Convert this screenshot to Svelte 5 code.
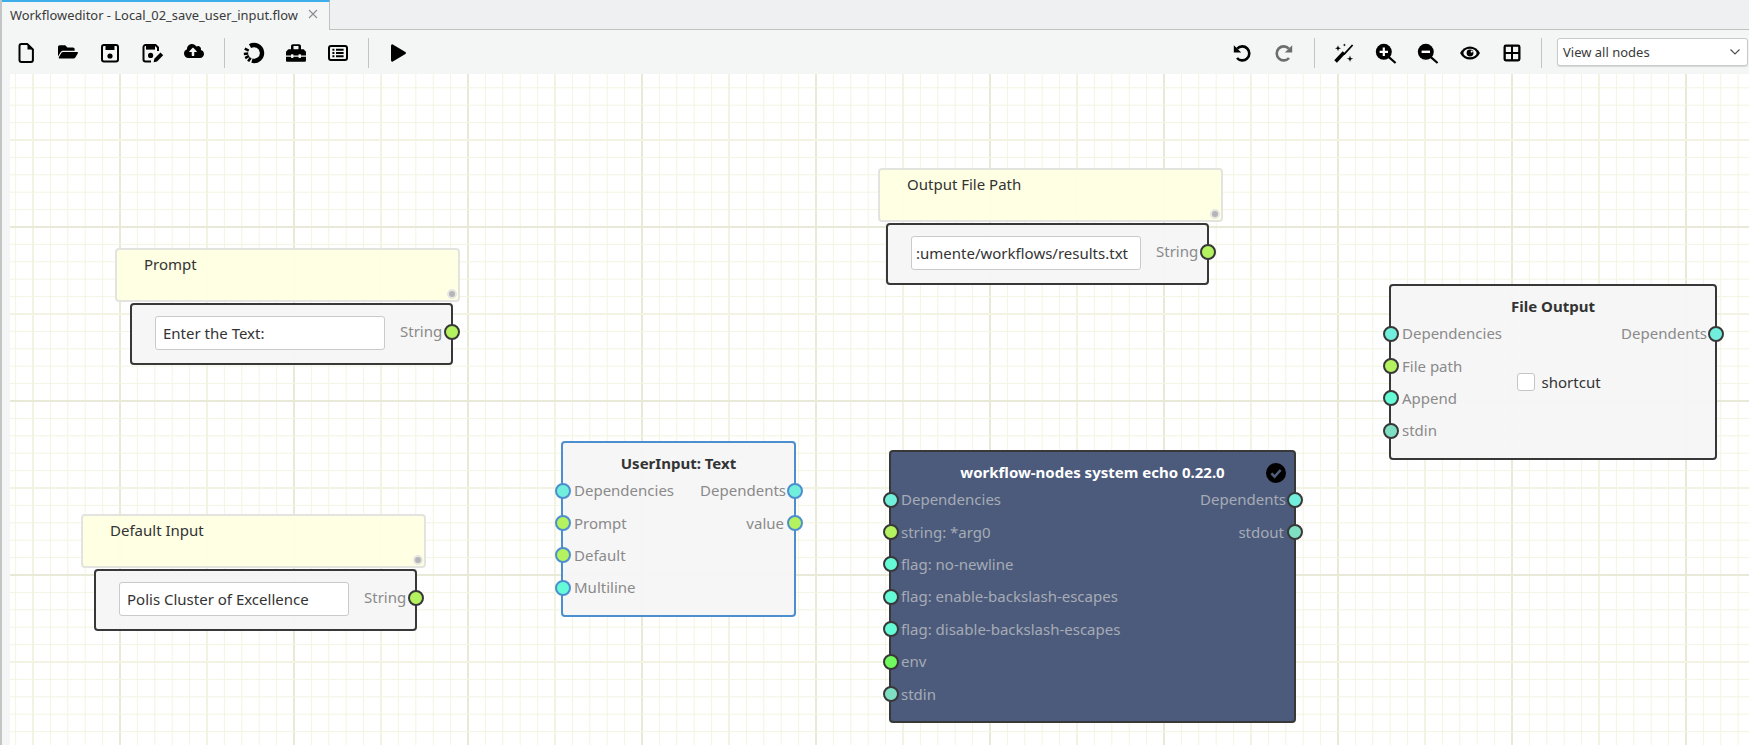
<script lang="ts">
  const DEP = '#71efdc';
  const STR = '#b5f25f';
  const FLAG = '#64fbd6';
  const ENV = '#70fb5e';
  const PIPE = '#7fdfc2';

  type Port = { label: string; color: string };
  type Node = {
    title: string;
    x: number;
    y: number;
    w: number;
    h: number;
    tone?: 'selected' | 'dark';
    inputs: Port[];
    outputs: Port[];
    shortcut?: boolean;
    done?: boolean;
  };

  const nodes: Node[] = [
    {
      title: 'UserInput: Text',
      x: 561, y: 441, w: 235, h: 176,
      tone: 'selected',
      inputs: [
        { label: 'Dependencies', color: DEP },
        { label: 'Prompt', color: STR },
        { label: 'Default', color: STR },
        { label: 'Multiline', color: FLAG },
      ],
      outputs: [
        { label: 'Dependents', color: DEP },
        { label: 'value', color: STR },
      ],
    },
    {
      title: 'workflow-nodes system echo 0.22.0',
      x: 889, y: 450, w: 407, h: 273,
      tone: 'dark',
      done: true,
      inputs: [
        { label: 'Dependencies', color: DEP },
        { label: 'string: *arg0', color: STR },
        { label: 'flag: no-newline', color: FLAG },
        { label: 'flag: enable-backslash-escapes', color: FLAG },
        { label: 'flag: disable-backslash-escapes', color: FLAG },
        { label: 'env', color: ENV },
        { label: 'stdin', color: PIPE },
      ],
      outputs: [
        { label: 'Dependents', color: DEP },
        { label: 'stdout', color: PIPE },
      ],
    },
    {
      title: 'File Output',
      x: 1389, y: 284, w: 328, h: 176,
      shortcut: true,
      inputs: [
        { label: 'Dependencies', color: DEP },
        { label: 'File path', color: STR },
        { label: 'Append', color: FLAG },
        { label: 'stdin', color: PIPE },
      ],
      outputs: [{ label: 'Dependents', color: DEP }],
    },
  ];

  // note + source node pairs, x/y is the note corner, inset is how far the node sits in
  const sources = [
    { note: 'Prompt', value: 'Enter the Text:', x: 115, y: 248, inset: 15 },
    { note: 'Output File Path', value: ':umente/workflows/results.txt', x: 878, y: 168, inset: 8, scrolled: true },
    { note: 'Default Input', value: 'Polis Cluster of Excellence', x: 81, y: 514, inset: 13 },
  ];

  const CANVAS_X = 10;
  const CANVAS_Y = 74;
  const STEP = 17.4;

  function gridKind(k: number) {
    if (k % 10 === 0) return 'heavy';
    if (k % 5 === 0) return 'medium';
    return 'minor';
  }

  // k = 0 sits on a heavy line, everything else counts out from there
  const vLines = Array.from({ length: 104 }, (_, i) => {
    const k = i - 6;
    return { pos: 110 + k * STEP, kind: gridKind(k) };
  });
  const hLines = Array.from({ length: 44 }, (_, i) => {
    const k = i - 8;
    return { pos: 153 + k * STEP, kind: gridKind(k) };
  });
</script>

<div class="window">
  <div class="tabbar">
    <div class="tab">
      <span>Workfloweditor - Local_02_save_user_input.flow</span>
      <svg class="close" width="10" height="10" viewBox="0 0 10 10">
        <path d="M1 1l8 8M9 1l-8 8" stroke="#8a8d90" stroke-width="1.1" fill="none" />
      </svg>
    </div>
  </div>

  <div class="toolbar">
    <button class="tool" aria-label="New">
      <svg width="24" height="24" viewBox="0 0 24 24">
        <path d="M7.5 3.100h6l5.400 5.400v10.400a2 2 0 0 1-2 2H7.500a2 2 0 0 1-2-2V5.100a2 2 0 0 1 2-2z" fill="none" stroke="#000" stroke-width="2" stroke-linejoin="round" />
        <path d="M13.500 3.100l5.400 5.400h-5.400z" fill="#000" />
      </svg>
    </button>
    <button class="tool" aria-label="Open">
      <svg width="24" height="24" viewBox="0 0 24 24">
        <g transform="translate(2 2) scale(0.0347)">
          <path d="M572.694 292.093L500.27 416.248A63.997 63.997 0 0 1 444.989 448H45.025c-18.523 0-30.064-20.093-20.731-36.093l72.424-124.155A64 64 0 0 1 152 256h399.964c18.523 0 30.064 20.093 20.73 36.093zM152 224h328v-48c0-26.51-21.49-48-48-48H272l-64-64H48C21.49 64 0 85.49 0 112v278.046l69.077-118.418C86.214 242.25 117.989 224 152 224z" />
        </g>
      </svg>
    </button>
    <button class="tool" aria-label="Save">
      <svg width="24" height="24" viewBox="0 0 24 24">
        <rect x="4" y="4" width="16" height="16.400" rx="2" fill="none" stroke="#000" stroke-width="2" />
        <rect x="7.500" y="4" width="9" height="5" fill="#000" />
        <circle cx="12" cy="15" r="2.600" fill="#000" />
      </svg>
    </button>
    <button class="tool" aria-label="Save as">
      <svg width="24" height="24" viewBox="0 0 24 24">
        <path d="M11 20.400H5.500a2 2 0 0 1-2-2V6a2 2 0 0 1 2-2h10l2.500 2.500V10" fill="none" stroke="#000" stroke-width="2" />
        <rect x="6" y="4" width="9" height="4.600" fill="#000" />
        <circle cx="10.600" cy="14.400" r="2.600" fill="#000" />
        <path d="M13.600 21.200l.7-3.400 6.200-6.200 2.700 2.700-6.200 6.200z" fill="#000" />
      </svg>
    </button>
    <button class="tool" aria-label="Upload">
      <svg width="24" height="24" viewBox="0 0 24 24">
        <g transform="translate(2 2) scale(0.03125)">
          <path d="M537.6 226.6c4.1-10.7 6.4-22.4 6.4-34.6 0-53-43-96-96-96-19.7 0-38.1 6-53.3 16.2C367 64.2 315.3 32 256 32c-88.4 0-160 71.6-160 160 0 2.7.1 5.4.2 8.1C40.2 219.8 0 273.2 0 336c0 79.5 64.5 144 144 144h368c70.7 0 128-57.3 128-128 0-61.9-44-113.6-102.4-125.4zM393.4 288H328v112c0 8.8-7.2 16-16 16h-48c-8.8 0-16-7.2-16-16V288h-65.4c-14.3 0-21.4-17.2-11.3-27.3l105.4-105.4c6.2-6.2 16.4-6.2 22.6 0l105.4 105.4c10.1 10.1 2.9 27.3-11.3 27.3z" />
        </g>
      </svg>
    </button>
    <span class="sep wide"></span>
    <button class="tool" aria-label="Runs">
      <svg width="24" height="24" viewBox="0 0 24 24">
        <path d="M8 5.070A8 8 0 1 1 9.930 19.730" fill="none" stroke="#000" stroke-width="4.400" />
        <path d="M8.670 16.750L6.150 20.350M6.980 14.900L3.170 17.100M6.220 12.500L1.840 12.890M6.740 9.550L2.760 7.690" stroke="#000" stroke-width="2.500" fill="none" />
      </svg>
    </button>
    <button class="tool" aria-label="Tools">
      <svg width="24" height="24" viewBox="0 0 24 24">
        <g transform="translate(2 2) scale(0.039)">
          <path d="M502.63 214.63l-45.25-45.25c-6-6-14.14-9.37-22.63-9.37H384V80c0-26.51-21.49-48-48-48H176c-26.51 0-48 21.49-48 48v80H77.25c-8.49 0-16.62 3.37-22.63 9.37L9.37 214.63c-6 6-9.37 14.14-9.37 22.63V320h128v-16c0-8.84 7.16-16 16-16h32c8.84 0 16 7.16 16 16v16h128v-16c0-8.84 7.16-16 16-16h32c8.84 0 16 7.16 16 16v16h128v-82.75c0-8.48-3.37-16.62-9.37-22.62zM320 160H192V80h128v80zm64 208c0 8.84-7.16 16-16 16h-32c-8.84 0-16-7.16-16-16v-16H192v16c0 8.84-7.16 16-16 16h-32c-8.84 0-16-7.16-16-16v-16H0v96c0 17.67 14.33 32 32 32h448c17.67 0 32-14.33 32-32v-96H384v16z" />
        </g>
      </svg>
    </button>
    <button class="tool" aria-label="Log">
      <svg width="24" height="24" viewBox="0 0 24 24">
        <rect x="3" y="5" width="18" height="14" rx="2" fill="none" stroke="#000" stroke-width="2" />
        <path d="M6.400 8.800h2M6.400 12h2M6.400 15.200h2M10 8.800h7.600M10 12h7.600M10 15.200h7.600" stroke="#000" stroke-width="2" fill="none" />
      </svg>
    </button>
    <span class="sep wide"></span>
    <button class="tool" aria-label="Run">
      <svg width="24" height="24" viewBox="0 0 24 24">
        <path transform="translate(-0.500 0)" d="M5.500 4.400a1.200 1.200 0 0 1 1.800-1l12.600 7.600a1.200 1.200 0 0 1 0 2L7.300 20.600a1.200 1.200 0 0 1-1.800-1z" />
      </svg>
    </button>

    <div class="spacer"></div>

    <button class="tool" aria-label="Undo">
      <svg width="24" height="24" viewBox="0 0 24 24">
        <g transform="translate(-1 0)">
          <path d="M7.200 7.600A7 7 0 1 1 7 17" fill="none" stroke="#000" stroke-width="2.600" />
          <path d="M3.800 4.200v7.400h7.400z" fill="#000" />
        </g>
      </svg>
    </button>
    <button class="tool" aria-label="Redo">
      <svg width="24" height="24" viewBox="0 0 24 24">
        <g transform="translate(-1 0)">
          <path d="M16.800 7.600A7 7 0 1 0 17 17" fill="none" stroke="#6d6d6d" stroke-width="2.600" />
          <path d="M20.200 4.200v7.400h-7.400z" fill="#6d6d6d" />
        </g>
      </svg>
    </button>
    <span class="sep"></span>
    <button class="tool" aria-label="Auto layout">
      <svg width="24" height="24" viewBox="0 0 24 24">
        <path d="M12 13.400L20.600 4" stroke="#000" stroke-width="1.800" fill="none" />
        <path d="M3.600 20.600L12 11.600" stroke="#000" stroke-width="3.600" fill="none" />
        <path d="M6 4.200l.8 2.200 2.200.8-2.200.8-.8 2.200-.8-2.200-2.200-.8 2.200-.8zM18 14.600l.8 2.400 2.400.8-2.400.8-.8 2.400-.8-2.400-2.400-.8 2.400-.8zM12.400 2.400l.4 1.200 1.200.4-1.200.4-.4 1.200-.4-1.200-1.200-.4 1.200-.4z" />
      </svg>
    </button>
    <button class="tool" aria-label="Zoom in">
      <svg width="24" height="24" viewBox="0 0 24 24">
        <path d="M14 15.400L21.600 22" stroke="#000" stroke-width="2.200" fill="none" />
        <circle cx="9.800" cy="10.800" r="8" />
        <path d="M5.600 10.800h8.400M9.800 6.600V15" stroke="#fff" stroke-width="2.200" fill="none" />
      </svg>
    </button>
    <button class="tool" aria-label="Zoom out">
      <svg width="24" height="24" viewBox="0 0 24 24">
        <path d="M14 15.400L21.600 22" stroke="#000" stroke-width="2.200" fill="none" />
        <circle cx="9.800" cy="10.800" r="8" />
        <path d="M5.600 10.800h8.400" stroke="#fff" stroke-width="2.400" fill="none" />
      </svg>
    </button>
    <button class="tool" aria-label="Toggle visibility">
      <svg width="24" height="24" viewBox="0 0 24 24">
        <path d="M2 12c2.400-4.400 6-6.600 10-6.600s7.600 2.200 10 6.600c-2.400 4.400-6 6.600-10 6.600S4.400 16.400 2 12z" />
        <ellipse cx="12" cy="12" rx="6.600" ry="4.300" fill="#f4f6f6" />
        <circle cx="12" cy="12" r="3.400" />
        <circle cx="13.700" cy="10.600" r="1.100" fill="#f4f6f6" />
      </svg>
    </button>
    <button class="tool" aria-label="Grid">
      <svg width="24" height="24" viewBox="0 0 24 24">
        <rect x="3.500" y="3.500" width="17" height="17" rx="2.400" />
        <rect x="5.800" y="5.800" width="5.200" height="5.200" fill="#f4f6f6" />
        <rect x="13" y="5.800" width="5.200" height="5.200" fill="#f4f6f6" />
        <rect x="5.800" y="13" width="5.200" height="5.200" fill="#f4f6f6" />
        <rect x="13" y="13" width="5.200" height="5.200" fill="#f4f6f6" />
      </svg>
    </button>
    <span class="sep"></span>
    <div class="select">
      <span>View all nodes</span>
      <svg width="12" height="8" viewBox="0 0 12 8">
        <path d="M1.500 1.500L6 6l4.500-4.500" fill="none" stroke="#4d4d4d" stroke-width="1.100" />
      </svg>
    </div>
  </div>

  <div class="canvas">
    <svg class="grid" width="1739" height="671">
      {#each vLines as l}
        <line class={l.kind} x1={l.pos} x2={l.pos} y1="0" y2="671" />
      {/each}
      {#each hLines as l}
        <line class={l.kind} x1="0" x2="1739" y1={l.pos} y2={l.pos} />
      {/each}
    </svg>

    {#each sources as s}
      <div class="source" style="left: {s.x - CANVAS_X}px; top: {s.y - CANVAS_Y}px">
        <div class="note">
          <span>{s.note}</span>
          <i class="handle"></i>
        </div>
        <div class="source-node" style="margin-left: {s.inset}px">
          <div class="field" class:scrolled={s.scrolled}>{s.value}</div>
          <span class="label">String</span>
          <i class="port right" style="background: {STR}"></i>
        </div>
      </div>
    {/each}

    {#each nodes as n}
      <div
        class="node {n.tone ?? ''}"
        style="left: {n.x - CANVAS_X}px; top: {n.y - CANVAS_Y}px; width: {n.w}px; height: {n.h}px"
      >
        <div class="title">{n.title}</div>
        {#if n.done}
          <svg class="done" width="20" height="20" viewBox="0 0 20 20">
            <circle cx="10" cy="10" r="10" fill="#000" />
            <path d="M5.400 10.400l3.200 3.200 6-6.600" fill="none" stroke="#53607c" stroke-width="2.600" />
          </svg>
        {/if}
        <div class="body">
          <div class="col">
            {#each n.inputs as p}
              <div class="row">
                <i class="port left" style="background: {p.color}"></i>
                <span class="label">{p.label}</span>
              </div>
            {/each}
          </div>
          <div class="middle">
            {#if n.shortcut}
              <div class="check"><i class="box"></i>shortcut</div>
            {/if}
          </div>
          <div class="col outs">
            {#each n.outputs as p}
              <div class="row">
                <span class="label">{p.label}</span>
                <i class="port right" style="background: {p.color}"></i>
              </div>
            {/each}
          </div>
        </div>
      </div>
    {/each}
  </div>
</div>

<style>
  :global(body) {
    margin: 0;
    overflow: hidden;
    background: #f4f6f6;
  }

  .window {
    width: 1749px;
    height: 745px;
    display: flex;
    flex-direction: column;
    overflow: hidden;
    font-family: "Noto Sans", sans-serif;
    font-size: 15px;
    color: #333;
    box-sizing: border-box;
    border-left: 2px solid #c2c4c6;
  }

  .tabbar {
    height: 30px;
    flex-shrink: 0;
    display: flex;
    background: #eff0f1;
    border-bottom: 1px solid #bfc1c3;
    box-sizing: border-box;
  }

  .tab {
    width: 328px;
    height: 30px;
    box-sizing: border-box;
    display: flex;
    align-items: center;
    gap: 10px;
    padding: 0 0 2px 8px;
    background: #f4f6f6;
    border-top: 2px solid #3daee9;
    border-right: 1px solid #bfc1c3;
    font-size: 12.900px;
    color: #3a3a3a;
    white-space: nowrap;
  }

  .close {
    flex-shrink: 0;
    margin-top: -2px;
  }

  .toolbar {
    height: 44px;
    flex-shrink: 0;
    box-sizing: border-box;
    display: flex;
    align-items: center;
    padding: 2px 0 0 3px;
    background: #f4f6f6;
  }

  .tool {
    width: 42px;
    height: 32px;
    padding: 0;
    border: 0;
    background: none;
    display: flex;
    align-items: center;
    justify-content: center;
    flex-shrink: 0;
  }

  .sep {
    width: 1px;
    height: 30px;
    margin: 0 8px;
    background: #c2c4c6;
    flex-shrink: 0;
  }

  .sep.wide {
    margin: 0 8.500px;
  }

  .spacer {
    flex: 1;
  }

  .select {
    width: 191px;
    height: 28px;
    margin: -2px 1px 0 7px;
    padding: 0 6px 0 5px;
    box-sizing: border-box;
    flex-shrink: 0;
    display: flex;
    align-items: center;
    justify-content: space-between;
    background: #fff;
    border: 1px solid #c8cacc;
    border-radius: 3px;
    box-shadow: 0 1px 1px rgba(0, 0, 0, 0.12);
    font-size: 13px;
    color: #3a3a3a;
  }

  .canvas {
    position: relative;
    flex: 1;
    margin-left: 8px;
    background: #fff;
    overflow: hidden;
  }

  .grid {
    position: absolute;
    inset: 0;
  }

  .grid line {
    stroke: #f3f4e2;
    stroke-width: 1;
  }

  .grid line.medium {
    stroke: #f2f3e2;
    stroke-width: 2;
  }

  .grid line.heavy {
    stroke: #e8e9d6;
    stroke-width: 2;
  }

  .source {
    position: absolute;
    width: 345px;
  }

  .note {
    position: relative;
    height: 54px;
    box-sizing: border-box;
    padding: 4px 0 0 27px;
    background: rgba(255, 255, 226, 0.92);
    border: 2px solid #e3e4e0;
    border-radius: 4px;
    line-height: 20px;
  }

  .handle {
    position: absolute;
    right: 1px;
    bottom: 1px;
    width: 6px;
    height: 6px;
    border-radius: 50%;
    background: #b5b5b8;
    border: 2px solid #e6e6e2;
  }

  .source-node {
    position: relative;
    width: 323px;
    height: 62px;
    margin-top: 1px;
    box-sizing: border-box;
    display: flex;
    align-items: center;
    padding: 0 0 0 23px;
    background: rgba(245, 245, 246, 0.94);
    border: 2px solid #383838;
    border-radius: 4px;
  }

  .source-node .label {
    margin: -7px 0 0 15px;
  }

  .source-node .port {
    top: 19px;
  }

  .field {
    width: 230px;
    height: 34px;
    margin-top: -2px;
    box-sizing: border-box;
    padding: 0 7px;
    display: flex;
    align-items: center;
    background: #fff;
    border: 1px solid #c8cacc;
    border-radius: 3px;
    flex-shrink: 0;
    white-space: nowrap;
  }

  .field.scrolled {
    padding-left: 4px;
  }

  .node {
    position: absolute;
    box-sizing: border-box;
    display: flex;
    flex-direction: column;
    background: rgba(245, 245, 246, 0.94);
    border: 2px solid #383838;
    border-radius: 4px;
  }

  .node.selected {
    border-color: #4d8fce;
  }

  .node.selected .port {
    border-color: #4d8fce;
  }

  .node.dark {
    background: rgba(70, 86, 120, 0.97);
  }

  .node.dark .label {
    color: #a6abb5;
  }

  .node.dark .title {
    color: #fff;
  }

  .title {
    height: 31px;
    flex-shrink: 0;
    padding-top: 9px;
    box-sizing: border-box;
    text-align: center;
    font-weight: 700;
    line-height: 22px;
  }

  .done {
    position: absolute;
    top: 11px;
    right: 8px;
  }

  .body {
    display: grid;
    grid-template-columns: auto 1fr auto;
  }

  .col {
    display: flex;
    flex-direction: column;
  }

  .outs {
    align-items: flex-end;
  }

  .row {
    position: relative;
    height: 32.400px;
    display: flex;
    align-items: center;
    padding: 0 8px 0 11px;
  }

  .node.dark .row {
    padding-left: 10px;
  }

  .outs .row + .row {
    padding-right: 10px;
  }

  .label {
    color: #8a8a8a;
    white-space: nowrap;
  }

  .port {
    position: absolute;
    width: 16px;
    height: 16px;
    box-sizing: border-box;
    border: 2.200px solid #383838;
    border-radius: 50%;
  }

  .row .port {
    top: 8.700px;
  }

  .port.left {
    left: -8.500px;
  }

  .port.right {
    right: -9px;
  }

  .middle {
    display: flex;
    align-items: center;
    justify-content: center;
  }

  .check {
    display: flex;
    align-items: center;
    gap: 7px;
    margin-left: -3px;
  }

  .box {
    width: 18px;
    height: 18px;
    box-sizing: border-box;
    background: #fff;
    border: 1px solid #c4c6c8;
    border-radius: 3px;
  }
</style>
